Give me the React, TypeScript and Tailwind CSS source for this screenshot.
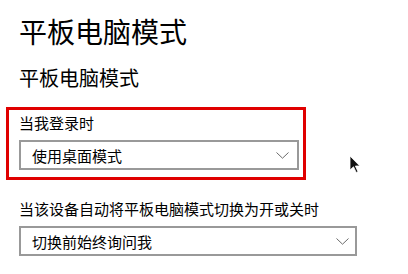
import React from "react";

function Chevron() {
  return (
    <svg width="13" height="7" viewBox="0 0 13 7" className="shrink-0">
      <path d="M0.5 0.5 L6.5 6.2 L12.5 0.5" fill="none" stroke="#6b6b6b" strokeWidth="1" />
    </svg>
  );
}

export default function App() {
  return (
    <div className="relative w-[408px] h-[274px] bg-white text-black font-['Microsoft_YaHei','Noto_Sans_CJK_SC',sans-serif] overflow-hidden">
      <div className="pl-[19px] pt-[17px] text-[28px] leading-[28px]">平板电脑模式</div>
      <div className="pl-[19px] mt-[23px] text-[20px] leading-[20px]">平板电脑模式</div>
      <div className="ml-[6px] mt-[19px] w-[300px] border-[3px] border-[#e00000] pl-[10px] pt-[5px] pb-[7px]">
        <div className="text-[15px] leading-[15px]">当我登录时</div>
        <div className="mt-[10px] w-[280px] h-[30px] border-2 border-[#999999] flex items-center justify-between pl-[11px] pr-[8px]">
          <span className="text-[15px] leading-[15px]">使用桌面模式</span>
          <Chevron />
        </div>
      </div>
      <div className="pl-[19px] mt-[21px] text-[15px] leading-[15px]">当该设备自动将平板电脑模式切换为开或关时</div>
      <div className="ml-[19px] mt-[10px] w-[338px] h-[30px] border-2 border-[#999999] flex items-center justify-between pl-[11px] pr-[6px]">
        <span className="text-[15px] leading-[15px]">切换前始终询问我</span>
        <Chevron />
      </div>
      <svg className="absolute left-[349px] top-[155px]" width="12" height="19" viewBox="0 0 12 19">
        <path d="M1 1 L1 15 L4.5 11.8 L7.2 17.5 L9 16.7 L6.4 11 L10.8 11 Z" fill="#111" stroke="#fff" strokeWidth="0.8" />
      </svg>
    </div>
  );
}
